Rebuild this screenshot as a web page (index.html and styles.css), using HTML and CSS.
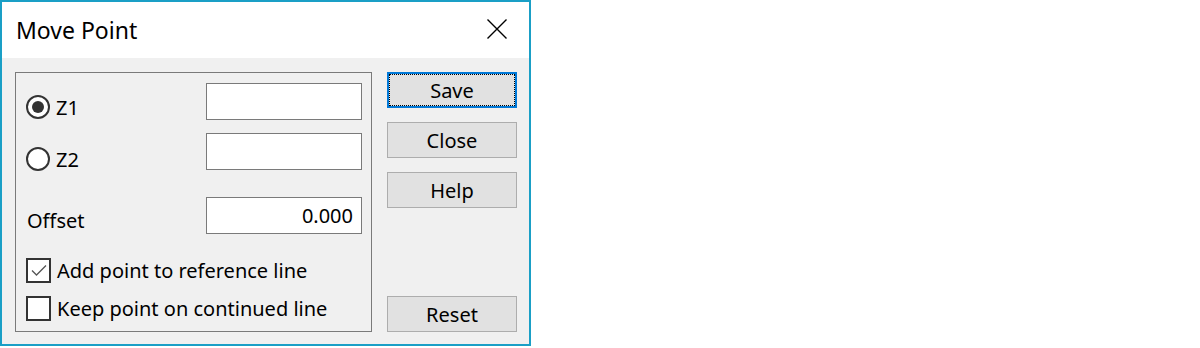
FILE: index.html
```html
<!DOCTYPE html>
<html>
<head>
<meta charset="utf-8">
<link rel="stylesheet" href="styles.css">
</head>
<body>
<div class="window">
  <div class="titlebar">
    <span class="title">Move Point</span>
    <svg class="close-x" width="20" height="20" viewBox="0 0 20 20"><path d="M0.5 0.5 L19.5 19.5 M19.5 0.5 L0.5 19.5" stroke="#000" stroke-width="1.4" fill="none"/></svg>
  </div>
  <div class="content">
    <div class="group">
      <div class="row row-z1">
        <label class="opt"><span class="radio checked"><span class="dot"></span></span><span class="lbl">Z1</span></label>
        <div class="input"></div>
      </div>
      <div class="row row-z2">
        <label class="opt"><span class="radio"></span><span class="lbl">Z2</span></label>
        <div class="input"></div>
      </div>
      <div class="row row-offset">
        <span class="plain">Offset</span>
        <div class="input num">0.000</div>
      </div>
      <div class="checks">
        <label class="chk"><span class="box"><svg width="20" height="20" viewBox="0 0 20 20"><path d="M3 9.5 L7.5 14 L17 4.5" stroke="#555" stroke-width="1.3" fill="none"/></svg></span><span class="lbl">Add point to reference line</span></label>
        <label class="chk"><span class="box"></span><span class="lbl">Keep point on continued line</span></label>
      </div>
    </div>
    <div class="buttons">
      <div class="btn default">Save</div>
      <div class="btn">Close</div>
      <div class="btn">Help</div>
      <div class="btn reset">Reset</div>
    </div>
  </div>
</div>
</body>
</html>
```
FILE: styles.css
```css
html, body {
  margin: 0;
  padding: 0;
  background: #ffffff;
}
body {
  font-family: "Noto Sans", "Open Sans", sans-serif;
  color: #000;
}
.window {
  box-sizing: border-box;
  width: 531px;
  height: 346px;
  border: 2px solid #1a9fc6;
  display: flex;
  flex-direction: column;
  background: #f0f0f0;
}
.titlebar {
  height: 56px;
  background: #ffffff;
  display: flex;
  align-items: center;
  padding-left: 14px;
  padding-right: 22px;
  flex-shrink: 0;
}
.title {
  font-size: 23px;
  line-height: 31px;
  flex: 1;
}
.close-x {
  display: block;
  margin-top: -2px;
}
.content {
  flex: 1;
  display: flex;
  padding: 14px 0 0 13px;
  gap: 15px;
}
.group {
  box-sizing: border-box;
  width: 357px;
  height: 260px;
  border: 1px solid #7a7a7a;
  padding: 10px 9px 0 10px;
  display: flex;
  flex-direction: column;
}
.row {
  display: flex;
  justify-content: space-between;
  align-items: flex-start;
}
.row-z2 { margin-top: 13px; }
.row-offset { margin-top: 26px; }
.opt {
  display: flex;
  align-items: center;
  height: 24px;
  margin-top: 12px;
}
.row-z2 .opt { margin-top: 14px; }
.radio {
  box-sizing: border-box;
  width: 24px;
  height: 24px;
  border: 2px solid #333;
  border-radius: 50%;
  background: #fff;
  display: flex;
  align-items: center;
  justify-content: center;
}
.radio .dot {
  width: 12px;
  height: 12px;
  border-radius: 50%;
  background: #333;
}
.lbl {
  font-size: 20px;
  line-height: 27px;
  margin-left: 6px;
}
.plain {
  font-size: 20px;
  line-height: 27px;
  margin-top: 10px;
  margin-left: 1px;
}
.input {
  box-sizing: border-box;
  width: 156px;
  height: 37px;
  border: 1px solid #7a7a7a;
  background: #fff;
  font-size: 20px;
  display: flex;
  align-items: center;
  justify-content: flex-end;
  padding-right: 8px;
}
.checks {
  margin-top: 24px;
  display: flex;
  flex-direction: column;
  gap: 13px;
}
.chk {
  display: flex;
  align-items: center;
  height: 25px;
}
.box {
  box-sizing: border-box;
  width: 25px;
  height: 25px;
  border: 2px solid #333;
  background: #fff;
  display: flex;
  align-items: center;
  justify-content: center;
}
.box svg { display: block; }
.chk .lbl { margin-left: 6px; }
.buttons {
  width: 130px;
  height: 260px;
  display: flex;
  flex-direction: column;
  gap: 14px;
}
.btn {
  box-sizing: border-box;
  height: 36px;
  background: #e1e1e1;
  border: 1px solid #adadad;
  font-size: 20px;
  display: flex;
  align-items: center;
  justify-content: center;
}
.btn.default {
  border: 2px solid #0078d7;
  outline: 1px dotted #000;
  outline-offset: -3px;
}
.btn.reset { margin-top: auto; }
```
